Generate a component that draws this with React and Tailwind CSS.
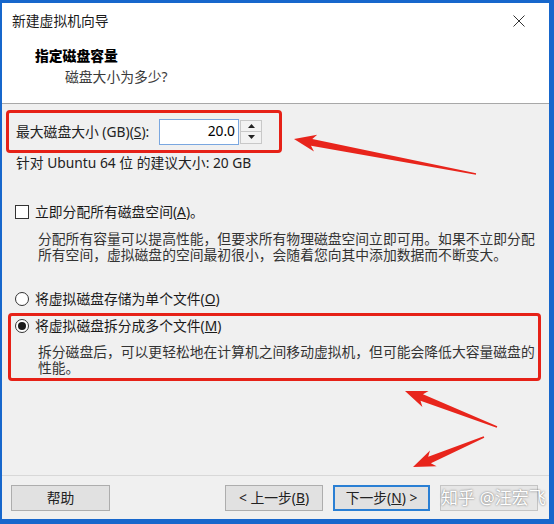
import React from "react";

function arrowPoints(tip, tail, headLen = 22, headW = 17, shaftW = 7, tailW = 1.5) {
  const dx = tail[0] - tip[0];
  const dy = tail[1] - tip[1];
  const len = Math.hypot(dx, dy);
  const ux = dx / len, uy = dy / len;
  const nx = -uy, ny = ux;
  const bx = tip[0] + ux * headLen, by = tip[1] + uy * headLen;
  const nb = [bx - ux * 4, by - uy * 4];
  const p = (x, y) => `${x.toFixed(1)},${y.toFixed(1)}`;
  return [
    p(tip[0], tip[1]),
    p(bx + nx * headW / 2, by + ny * headW / 2),
    p(nb[0] + nx * shaftW / 2, nb[1] + ny * shaftW / 2),
    p(tail[0] + nx * tailW / 2, tail[1] + ny * tailW / 2),
    p(tail[0] - nx * tailW / 2, tail[1] - ny * tailW / 2),
    p(nb[0] - nx * shaftW / 2, nb[1] - ny * shaftW / 2),
    p(bx - nx * headW / 2, by - ny * headW / 2),
  ].join(" ");
}

function Radio({ checked }) {
  return (
    <span className="w-[14px] h-[14px] rounded-full border border-[#333] bg-white flex items-center justify-center shrink-0">
      {checked && <span className="w-[8px] h-[8px] rounded-full bg-[#1a1a1a]" />}
    </span>
  );
}

export default function App() {
  return (
    <div className="relative w-[554px] h-[524px] overflow-hidden bg-[#1767cc] pl-[2px] pt-[3px] font-['Noto_Sans','Noto_Sans_CJK_SC',sans-serif] text-[13.8px] text-[#1a1a1a]">
      <div className="w-[547px] h-[516px] bg-[#f0f0f0] flex flex-col">
        {/* title bar */}
        <div className="h-[36px] bg-white flex items-center justify-between pl-[10px] pr-[24px]">
          <span className="leading-[18px]">新建虚拟机向导</span>
          <svg width="12" height="12" viewBox="0 0 12 12">
            <path d="M0.5 0.5 L11.5 11.5 M11.5 0.5 L0.5 11.5" stroke="#333" strokeWidth="1" />
          </svg>
        </div>
        {/* header */}
        <div className="h-[65px] bg-white border-b border-[#a8a8a8] pl-[33px] pt-[8px]">
          <div className="font-black leading-[18px] text-black">指定磁盘容量</div>
          <div className="pl-[30px] mt-[3px] leading-[18px] text-[#3a3a3a]">磁盘大小为多少?</div>
        </div>
        {/* content */}
        <div className="flex-1 flex flex-col">
          <div className="mt-[6px] ml-[4px] w-[276px] h-[43px] border-[3px] border-[#e62117] rounded-[4px] flex items-center pl-[7px]">
            <span className="w-[143px] leading-[18px] text-[#222] whitespace-nowrap">
              最大磁盘大小 (GB)(<span className="underline">S</span>):
            </span>
            <div className="w-[80px] h-[26px] border border-[#7aa7e0] bg-white flex items-center justify-end pr-[3px] text-black">
              20.0
            </div>
            <div className="w-[22px] h-[24px] ml-[1px] flex flex-col border border-[#c8c8c8] bg-[#f2f2f2]">
              <div className="flex-1 flex items-center justify-center border-b border-[#c8c8c8]">
                <svg width="7" height="4" viewBox="0 0 7 4"><path d="M3.5 0 L7 4 L0 4 Z" fill="#222" /></svg>
              </div>
              <div className="flex-1 flex items-center justify-center">
                <svg width="7" height="4" viewBox="0 0 7 4"><path d="M0 0 L7 0 L3.5 4 Z" fill="#222" /></svg>
              </div>
            </div>
          </div>
          <div className="mt-[1px] pl-[14px] leading-[18px] text-[#222]">针对 Ubuntu 64 位 的建议大小: 20 GB</div>

          <div className="mt-[31px] pl-[13px] flex items-center leading-[18px]">
            <span className="w-[14px] h-[14px] border border-[#333] bg-white mr-[6px] shrink-0" />
            <span>立即分配所有磁盘空间(<span className="underline">A</span>)。</span>
          </div>
          <div className="mt-[10px] pl-[36px] leading-[16px] text-[#333] whitespace-nowrap">
            <div>分配所有容量可以提高性能，但要求所有物理磁盘空间立即可用。如果不立即分配</div>
            <div>所有空间，虚拟磁盘的空间最初很小，会随着您向其中添加数据而不断变大。</div>
          </div>

          <div className="mt-[27px] pl-[13px] flex items-center leading-[18px]">
            <span className="mr-[6px]"><Radio /></span>
            <span>将虚拟磁盘存储为单个文件(<span className="underline">O</span>)</span>
          </div>

          <div className="mt-[5px] ml-[6px] w-[533px] h-[68px] border-[3px] border-[#e62117] rounded-[4px] pl-[4px] pt-[1px]">
            <div className="flex items-center leading-[18px]">
              <span className="mr-[6px]"><Radio checked /></span>
              <span>将虚拟磁盘拆分成多个文件(<span className="underline">M</span>)</span>
            </div>
            <div className="mt-[9px] pl-[23px] leading-[16px] text-[#333] whitespace-nowrap">
              <div>拆分磁盘后，可以更轻松地在计算机之间移动虚拟机，但可能会降低大容量磁盘的</div>
              <div>性能。</div>
            </div>
          </div>
        </div>
        {/* footer */}
        <div className="h-[44px] border-t border-[#d8d8d8] flex items-start pt-[9px]">
          <button className="ml-[9px] w-[99px] h-[26px] bg-[#e1e1e1] border border-[#adadad] text-[#222]">帮助</button>
          <button className="ml-[115px] w-[98px] h-[26px] bg-[#e1e1e1] border border-[#adadad] text-[#222]">
            &lt; 上一步(<span className="underline">B</span>)
          </button>
          <button className="ml-[10px] w-[97px] h-[26px] bg-[#e1e1e1] border-2 border-[#2a7fd4] text-[#222]">
            下一步(<span className="underline">N</span>) &gt;
          </button>
          <button className="ml-[10px] w-[98px] h-[26px] bg-[#e6e6e6] border border-[#c4c4c4]" />
        </div>
      </div>

      {/* watermark */}
      <div className="absolute left-[441px] top-[485px] h-[26px] flex items-center text-[17px] text-white [text-shadow:0_0_2px_rgba(60,60,60,0.8)] whitespace-nowrap">
        知乎 @汪宏飞
      </div>

      {/* annotation arrows */}
      <svg className="absolute inset-0 pointer-events-none" width="554" height="524">
        <polygon points={arrowPoints([294, 139], [476, 174])} fill="#e8251c" />
        <polygon points={arrowPoints([405, 391], [497, 427])} fill="#e8251c" />
        <polygon points={arrowPoints([413, 467], [484, 437])} fill="#e8251c" />
      </svg>
    </div>
  );
}
